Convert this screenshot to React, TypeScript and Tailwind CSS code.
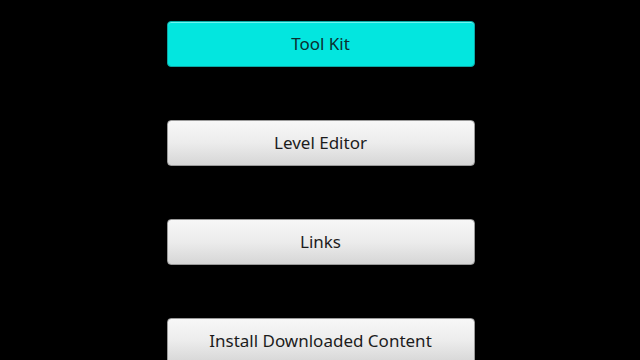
import React from "react";

const Btn = ({ label, active }: { label: string; active?: boolean }) => (
  <div
    className={
      active
        ? "w-[308px] h-[46px] shrink-0 rounded-[4px] border border-[#0aa8a5] bg-[#03e6df] flex items-center justify-center text-[17px] text-[#0b2f30] shadow-[inset_0_1px_0_#6ff5f0]"
        : "w-[308px] h-[46px] shrink-0 rounded-[4px] border border-[#9a9a9a] bg-gradient-to-b from-[#f7f7f7] via-[#ececec] to-[#d6d6d6] flex items-center justify-center text-[17px] text-[#1c1c1c]"
    }
    style={{ fontFamily: '"Noto Sans", "Open Sans", sans-serif' }}
  >
    {label}
  </div>
);

export default function App() {
  return (
    <div className="w-[640px] h-[360px] bg-black overflow-hidden flex flex-col items-center pt-[21px] gap-[53px] pl-[1px]">
      <Btn label="Tool Kit" active />
      <Btn label="Level Editor" />
      <Btn label="Links" />
      <Btn label="Install Downloaded Content" />
    </div>
  );
}
